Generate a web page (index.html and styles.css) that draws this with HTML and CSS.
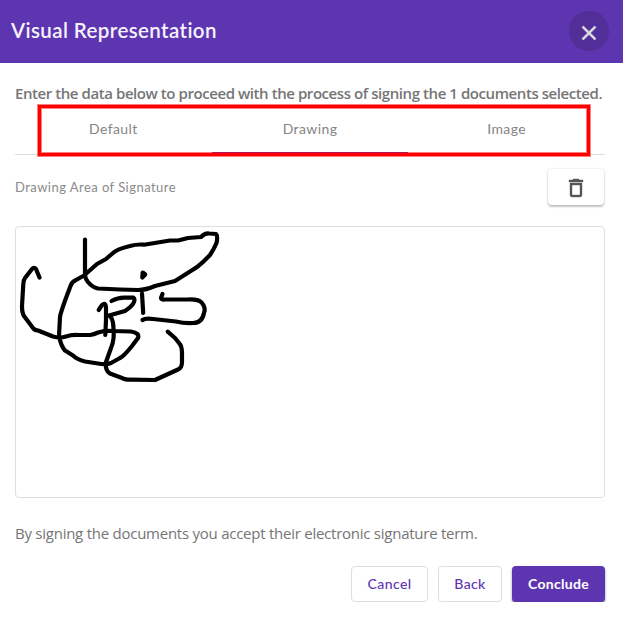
FILE: index.html
```
<!DOCTYPE html>
<html lang="en">
<head>
<meta charset="utf-8">
<title>Visual Representation</title>
<link rel="stylesheet" href="styles.css">
</head>
<body>
<header class="header">
  <h1 class="title">Visual Representation</h1>
  <button class="close" aria-label="Close">
    <svg width="24" height="24" viewBox="0 0 24 24"><path d="M19 6.41L17.59 5 12 10.59 6.41 5 5 6.41 10.59 12 5 17.59 6.41 19 12 13.41 17.59 19 19 17.59 13.41 12z"/></svg>
  </button>
</header>
<main class="body">
  <p class="intro"><span>Enter the data below to proceed with the process of signing the 1 documents selected.</span></p>
  <nav class="tabs">
    <a class="tab">Default</a>
    <a class="tab active">Drawing</a>
    <a class="tab">Image</a>
    <div class="highlight"></div>
  </nav>
  <div class="toolbar">
    <span class="label">Drawing Area of Signature</span>
    <button class="trash" aria-label="Clear">
      <svg width="24" height="24" viewBox="0 0 24 24"><path d="M6 19c0 1.100.9 2 2 2h8c1.100 0 2-.9 2-2V7H6v12zM8 9h8v10H8V9zm7.500-5l-1-1h-5l-1 1H5v2h14V4z"/></svg>
    </button>
  </div>
  <div class="canvas">
    <svg class="drawing" width="588" height="270" viewBox="16 227 588 270">
      <path d="M39.500 277.500L36 269Q34 266.500 32 269L25 278Q23.500 280 23.300 284L22 306Q22 313 24 316L33 328Q34 330 38 330.500L53 336.500Q60 338.500 66 336.500Q72 334.500 78 335L90 335Q94 334.500 98 332.500Q104 330.500 112 331L131 331.500Q140 333 138 338L132 346Q124 356 120 358L111 363Q106 365 98 363.500L85 361.500Q77 359.500 73 355.500L65 350.500Q61 346 59 336L60 317Q60.500 313 66 298L70.500 286Q72 281.500 76 280L84 275.500L97 264L106 259L113 253Q117 249 130 246Q137 244 144 244.700L170 240.500H178L188 238L201 237Q205 233 209 233.500L216 234Q218 236 216.500 243Q214 249 210 255L203 262Q198 267 190 271.500L175 281L155 286Q146 290 138 290L120 289.500L98 288.500Q92 287 88 282Q85 278 85 275V239.500"/>
      <path d="M142.700 272.500L145.200 274.500L142.300 277.500Z"/>
      <path d="M98.700 310L102 305Q105.500 302 106 307V320L105.300 335"/>
      <path d="M111.500 301Q119 297 126 297.700L133 297.500Q136 299 133 304Q130 308 125 311L109 315.500Q113 318 113.300 326Q115 339 111 348L106 362Q105 371 110 373.500L122 378Q124 379.500 130 379.700L155 380L178 369.500Q182 368 182 362V353Q182 346 179 343L175 338L167.700 331.700"/>
      <path d="M142 293.500L143.200 313"/>
      <path d="M162.500 294L161 298Q161 300 165 299.500H188Q199 299 202 303Q206 308 204 313Q202 323 193 323Q184 323.500 176 321.500L153 319Q145 318 142.500 320"/>
    </svg>
  </div>
  <p class="terms"><span>By signing the documents you accept their electronic signature term.</span></p>
  <footer class="actions">
    <button class="btn cancel">Cancel</button>
    <button class="btn back">Back</button>
    <button class="btn primary">Conclude</button>
  </footer>
</main>
</body>
</html>
```
FILE: styles.css
```
* { box-sizing: border-box; }
body {
  margin: 0;
  background: #fff;
  color: #757575;
  font-family: "Open Sans", sans-serif;
}
button { font-family: inherit; padding: 0; border: 0; }
.header {
  height: 63px;
  padding: 0 14px 0 11px;
  background: #5e35b1;
  display: flex;
  align-items: center;
  justify-content: space-between;
}
.title {
  margin: 0 0 3px;
  color: #f6f2fc;
  font-family: Lato, sans-serif;
  font-size: 20.5px;
  font-weight: 600;
  letter-spacing: 0.4px;
  line-height: 28px;
}
.close {
  width: 40px;
  height: 40px;
  margin-bottom: 1px;
  padding-top: 4px;
  border-radius: 50%;
  background: #512e98;
  display: flex;
  align-items: center;
  justify-content: center;
}
.close svg { fill: #e0dfe2; stroke: #e0dfe2; stroke-width: 0.6; }
.body { padding: 19px 18px 0 15px; }
.intro, .terms { margin: 0; white-space: nowrap; }
.intro {
  height: 23px;
  font-size: 15px;
  font-weight: 600;
  line-height: 23px;
  letter-spacing: -0.43px;
}
.tabs {
  position: relative;
  height: 50px;
  border-bottom: 1px solid #dedede;
  display: grid;
  grid-template-columns: repeat(3, 1fr);
}
.tab {
  color: #858585;
  font-family: Lato, sans-serif;
  font-size: 14px;
  letter-spacing: 0.4px;
  line-height: 48px;
  text-align: center;
}
.active { box-shadow: inset 0 -2px #5e35b1; }
.highlight {
  position: absolute;
  left: 23px;
  top: 0;
  width: 552px;
  height: 51px;
  border: 3px solid #f00;
  box-shadow: 0 0 0 1px rgba(255, 0, 0, .5), inset 0 0 0 1px rgba(255, 0, 0, .5);
}
.toolbar {
  height: 71px;
  padding: 14px 1px 0 0;
  display: flex;
  align-items: flex-start;
  justify-content: space-between;
}
.label {
  color: #8a8a8a;
  font-family: Lato, sans-serif;
  font-size: 13px;
  letter-spacing: 0.46px;
  line-height: 37px;
}
.trash {
  width: 56px;
  height: 36px;
  padding-top: 2px;
  border-radius: 4px;
  background: #fff;
  box-shadow: 0 2px 2px rgba(0, 0, 0, .22), 0 0 2px rgba(0, 0, 0, .18);
  display: flex;
  align-items: center;
  justify-content: center;
}
.trash svg { fill: #555; stroke: #555; stroke-width: 0.4; }
.canvas {
  height: 272px;
  border: 1px solid #dedede;
  border-radius: 4px;
}
.drawing {
  display: block;
  fill: none;
  stroke: #000;
  stroke-width: 4.2;
  stroke-linecap: round;
  stroke-linejoin: round;
}
.terms {
  margin-top: 23px;
  font-size: 15px;
  line-height: 24px;
  letter-spacing: -0.25px;
}
.actions {
  margin-top: 21px;
  display: flex;
  justify-content: flex-end;
  gap: 10px;
}
.btn {
  height: 36px;
  padding-bottom: 2px;
  border: 1px solid #dedede;
  border-radius: 4px;
  background: #fff;
  color: #5e35b1;
  font-family: Lato, sans-serif;
  font-size: 14px;
  font-weight: 500;
  letter-spacing: 0.4px;
}
.cancel { width: 77px; }
.back { width: 64px; }
.primary {
  width: 93px;
  border: 0;
  background: #5e35b1;
  color: #fff;
  font-weight: 700;
  letter-spacing: 0.3px;
  box-shadow: 0 2px 2px rgba(0, 0, 0, .3), 0 1px 3px rgba(0, 0, 0, .2);
}
```
